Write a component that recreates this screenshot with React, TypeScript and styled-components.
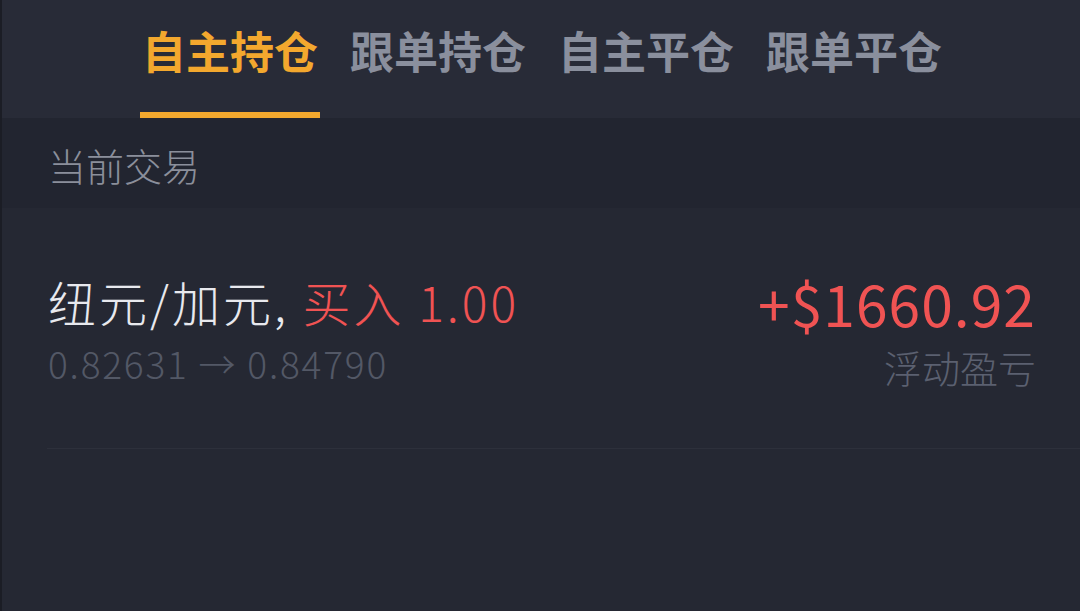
import React from "react";
import styled, { createGlobalStyle } from "styled-components";

const GlobalStyle = createGlobalStyle`
  html, body {
    margin: 0;
    padding: 0;
    background: #252833;
  }
  body {
    font-family: "Noto Sans CJK SC", "Noto Sans", sans-serif;
  }
`;

const tabs = ["自主持仓", "跟单持仓", "自主平仓", "跟单平仓"];

export default function App() {
  const [active, setActive] = React.useState(0);

  return (
    <>
      <GlobalStyle />
      <Page>
        <TabBar>
          {tabs.map((t, i) => (
            <Tab key={t} isActive={i === active} onClick={() => setActive(i)}>
              <TabLabel>{t}</TabLabel>
              <Underline isActive={i === active} />
            </Tab>
          ))}
        </TabBar>

        <SectionHeader>当前交易</SectionHeader>

        <TradeRow>
          <LeftCol>
            <Title>
              纽元/加元, <Buy>买入 1.00</Buy>
            </Title>
            <Prices>0.82631 → 0.84790</Prices>
          </LeftCol>
          <RightCol>
            <Profit>+$1660.92</Profit>
            <ProfitLabel>浮动盈亏</ProfitLabel>
          </RightCol>
        </TradeRow>
      </Page>
    </>
  );
}

const Page = styled.div`
  width: 1080px;
  height: 611px;
  background: #252833;
  border-left: 2px solid #1b1d25;
  box-sizing: border-box;
  overflow: hidden;
`;

const TabBar = styled.div`
  display: flex;
  gap: 28px;
  height: 118px;
  padding-left: 138px;
  background: #282b37;
  box-sizing: border-box;
`;

const Tab = styled.div<{ isActive: boolean }>`
  display: flex;
  flex-direction: column;
  align-items: center;
  justify-content: space-between;
  width: 180px;
  padding-top: 28px;
  box-sizing: border-box;
  cursor: pointer;
  color: ${({ isActive }) => (isActive ? "#f3a82e" : "#8a8f9d")};
`;

const TabLabel = styled.div`
  font-size: 44px;
  font-weight: 700;
  line-height: 1;
`;

const Underline = styled.div<{ isActive: boolean }>`
  width: 100%;
  height: 6px;
  background: ${({ isActive }) => (isActive ? "#f3a82e" : "transparent")};
`;

const SectionHeader = styled.div`
  height: 90px;
  padding: 28px 46px 0;
  box-sizing: border-box;
  background: #222530;
  color: #8b8f9b;
  font-size: 38px;
  font-weight: 300;
  line-height: 1;
`;

const TradeRow = styled.div`
  display: flex;
  justify-content: space-between;
  align-items: flex-start;
  height: 241px;
  margin-left: 45px;
  padding: 66px 44px 0 1px;
  box-sizing: border-box;
  border-bottom: 1px solid #2d303b;
`;

const LeftCol = styled.div`
  display: flex;
  flex-direction: column;
  margin-top: 3px;
`;

const Title = styled.div`
  font-size: 48px;
  font-weight: 300;
  line-height: 1;
  letter-spacing: 3px;
  color: #e8e9ee;
  white-space: nowrap;
`;

const Buy = styled.span`
  color: #f05353;
`;

const Prices = styled.div`
  margin-top: 20px;
  font-size: 37px;
  font-weight: 300;
  line-height: 1;
  letter-spacing: 1.8px;
  color: #535866;
`;

const RightCol = styled.div`
  display: flex;
  flex-direction: column;
  align-items: flex-end;
`;

const Profit = styled.div`
  font-size: 57px;
  line-height: 1;
  color: #f05353;
  letter-spacing: 1px;
`;

const ProfitLabel = styled.div`
  margin-top: 17px;
  font-size: 38px;
  font-weight: 300;
  line-height: 1;
  color: #5b6070;
`;
